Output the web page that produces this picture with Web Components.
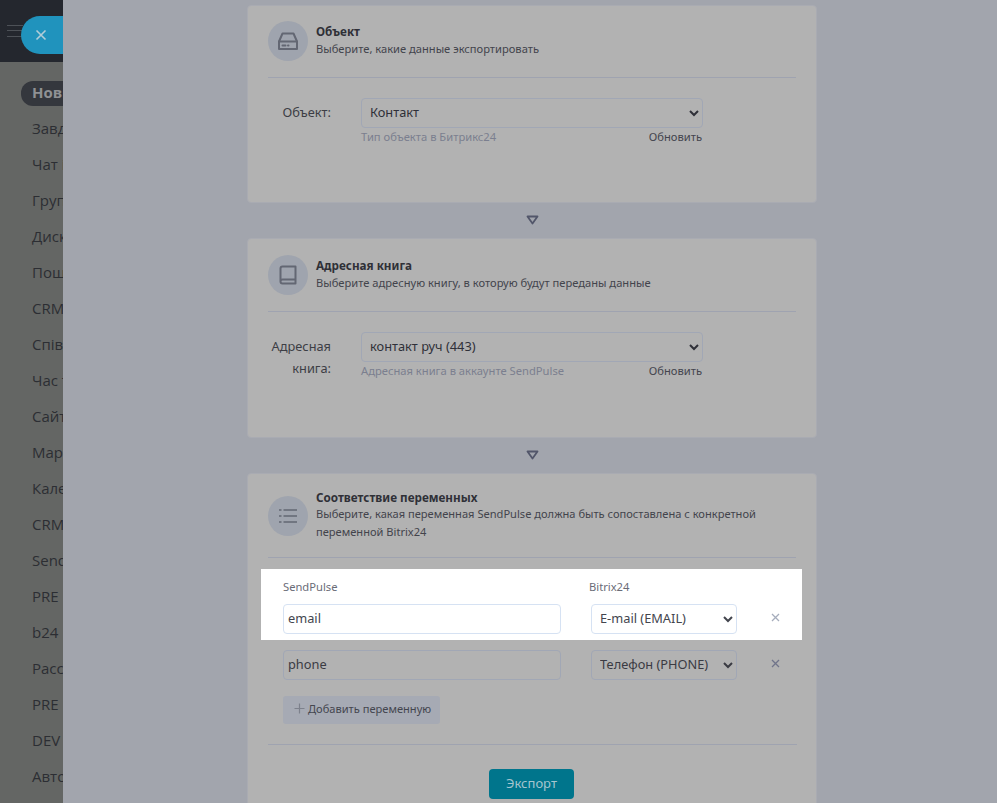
<!DOCTYPE html>
<html lang="ru">
<head>
<meta charset="utf-8">
<title>Экспорт</title>
<style>
  html, body { margin: 0; height: 100%; overflow: hidden; }
  body { font-family: "Noto Sans", "Liberation Sans", sans-serif; }
</style>
</head>
<body>
<app-shell>
  <side-nav slot="nav">
    <nav-item active>Новини</nav-item>
    <nav-item>Завдання</nav-item>
    <nav-item>Чат і дзвінки</nav-item>
    <nav-item>Групи</nav-item>
    <nav-item>Диск</nav-item>
    <nav-item>Пошта</nav-item>
    <nav-item>CRM</nav-item>
    <nav-item>Співробітники</nav-item>
    <nav-item>Час та звіти</nav-item>
    <nav-item>Сайти</nav-item>
    <nav-item>Маркетинг</nav-item>
    <nav-item>Календар</nav-item>
    <nav-item>CRM</nav-item>
    <nav-item>SendPulse</nav-item>
    <nav-item>PRE</nav-item>
    <nav-item>b24</nav-item>
    <nav-item>Рассылки</nav-item>
    <nav-item>PRE</nav-item>
    <nav-item>DEV</nav-item>
    <nav-item>Автоматизація</nav-item>
  </side-nav>

  <export-card heading="Объект" style="height:198px">
    <svg slot="icon" viewBox="0 0 24 24" width="24" height="24" fill="none" stroke="currentColor" stroke-width="2" stroke-linejoin="round" stroke-linecap="round"><path d="M6.500 4.500h11l3.500 8v7.500H3v-7.500z"/><path d="M3 12.500h18"/><path d="M6.500 16.500h3M12 16.500h.5"/></svg>
    <span slot="sub">Выберите, какие данные экспортировать</span>
    <select-field label="Объект:" value="Контакт" hint="Тип объекта в Битрикс24"></select-field>
  </export-card>
  <flow-arrow></flow-arrow>
  <export-card heading="Адресная книга" style="height:200px;padding-top:16px">
    <svg slot="icon" viewBox="0 0 24 24" width="24" height="24" fill="none" stroke="currentColor" stroke-width="2" stroke-linejoin="round" stroke-linecap="round"><path d="M4.500 18.500V5.500a2 2 0 0 1 2-2h13v17h-13a2 2 0 0 1-2-2a2 2 0 0 1 2-2h13"/></svg>
    <span slot="sub">Выберите адресную книгу, в которую будут переданы данные</span>
    <select-field label="Адресная книга:" value="контакт руч (443)" hint="Адресная книга в аккаунте SendPulse"></select-field>
  </export-card>
  <flow-arrow></flow-arrow>
  <export-card heading="Соответствие переменных" tall>
    <svg slot="icon" viewBox="0 0 24 24" width="24" height="24" fill="none" stroke="currentColor" stroke-width="1.600"><path d="M7.500 6H21M7.500 12H21M7.500 18H21"/><path d="M3 6h2.500M3 12h2.500M3 18h2.500"/></svg>
    <span slot="sub">Выберите, какая переменная SendPulse должна быть сопоставлена с конкретной переменной Bitrix24</span>
    <map-table>
      <map-row slot="first" field="email" target="E-mail (EMAIL)" lit></map-row>
      <map-row field="phone" target="Телефон (PHONE)"></map-row>
    </map-table>
  </export-card>
</app-shell>

<script>
class AppShell extends HTMLElement {
  constructor() {
    super();
    this.attachShadow({ mode: "open" });
    this.shadowRoot.innerHTML = `
      <style>
        :host { display: flex; height: 803px; overflow: hidden; position: relative; }
        .side { flex: 0 0 63px; overflow: hidden; }
        .panel { flex: 1; background: #a2a5ad; padding: 5px 180px 0 184px; overflow: hidden; }
      </style>
      <div class="side"><slot name="nav"></slot></div>
      <div class="panel"><slot></slot></div>
    `;
  }
}

class SideNav extends HTMLElement {
  constructor() {
    super();
    this.attachShadow({ mode: "open" });
    this.shadowRoot.innerHTML = `
      <style>
        :host { display: block; width: 63px; height: 803px; background: #646664; position: relative; overflow: hidden; }
        .top { height: 62px; background: #24272e; }
        .burger { position: absolute; left: 7px; top: 25px; width: 16px; height: 12px; border-top: 1px solid #4d5157; border-bottom: 1px solid #4d5157; box-sizing: border-box; }
        .burger::after { content: ""; display: block; height: 1px; margin-top: 4px; background: #4d5157; }
        .close { position: absolute; left: 21px; top: 16px; width: 80px; height: 38px; border-radius: 19px; background: #2093bd; color: #b3cdd8; }
        .close svg { position: absolute; left: 14px; top: 13px; }
        ul { margin: 0; padding: 18px 0 0; list-style: none; }
      </style>
      <div class="top"></div>
      <span class="burger"></span>
      <div class="close"><svg width="12" height="12" viewBox="0 0 12 12" fill="none" stroke="currentColor" stroke-width="1.600"><path d="M1.500 1.500l9 9M10.500 1.500l-9 9"/></svg></div>
      <ul><slot></slot></ul>
    `;
  }
}

class NavItem extends HTMLElement {
  constructor() {
    super();
    this.attachShadow({ mode: "open" });
    this.shadowRoot.innerHTML = `
      <style>
        :host { display: block; height: 36px; font: 15px/24px "Open Sans", "Noto Sans", sans-serif; color: #2c2e33; white-space: nowrap; }
        span { display: inline-block; margin-left: 21px; padding: 0 14px 0 11px; border-radius: 12px; height: 24px; }
        :host([active]) span { background: #34373d; color: #8f9194; font-weight: 700; height: 25px; line-height: 22px; }
      </style>
      <span><slot></slot></span>
    `;
  }
}

class ExportCard extends HTMLElement {
  constructor() {
    super();
    this.attachShadow({ mode: "open" });
    const title = this.getAttribute("heading");
    this.shadowRoot.innerHTML = `
      <style>
        :host { display: block; box-sizing: border-box; background: #b2b2b2; border: 1px solid #a9abb2; border-radius: 4px; padding: 15px 20px 0; color: #35363d; font: 11.150px/18px "Noto Sans", sans-serif; }
        header { display: flex; gap: 8px; align-items: flex-start; height: 56px; border-bottom: 1px solid #9fa3b0; }
        :host([tall]) { height: 340px; padding-top: 22px; }
        :host([tall]) header { height: 61px; }
        .circle { flex: 0 0 40px; height: 40px; border-radius: 50%; background: #9fa4ae; color: #636773; display: flex; align-items: center; justify-content: center; }
        h3 { margin: 2px 0 0; font-size: 11.700px; line-height: 17px; font-weight: 700; color: #2f3037; }
        p { margin: 0; color: #43444c; }
        :host([tall]) h3 { margin-top: -7px; line-height: 16px; }
        :host([tall]) p { font-size: 11.100px; }
      </style>
      <header>
        <div class="circle"><slot name="icon"></slot></div>
        <div>
          <h3>${title}</h3>
          <p><slot name="sub"></slot></p>
        </div>
      </header>
      <slot></slot>
    `;
  }
}

class SelectField extends HTMLElement {
  constructor() {
    super();
    this.attachShadow({ mode: "open" });
    this.shadowRoot.innerHTML = `
      <style>
        :host { display: grid; grid-template-columns: 63px 342px; column-gap: 30px; padding: 20px 0 0 0; font: 12px/18px "Noto Sans", sans-serif; }
        label { text-align: right; color: #3d3e45; padding-top: 3px; line-height: 22px; font-size: 12.800px; }
        select { display: block; width: 100%; height: 30px; background: transparent; border: 1px solid #a1a7b5; border-radius: 4px; padding: 0 4px 2px; color: #2f3038; font: 12.800px "Noto Sans", sans-serif; }
        .meta { display: flex; justify-content: space-between; padding: 0 1px 0 0; font-size: 11.200px; line-height: 18px; }
        .hint { color: #7b7f8f; }
        .refresh { color: #44454e; }
      </style>
      <label>${this.getAttribute("label")}</label>
      <div>
        <select><option>${this.getAttribute("value")}</option></select>
        <div class="meta"><span class="hint">${this.getAttribute("hint")}</span><span class="refresh">Обновить</span></div>
      </div>
    `;
  }
}

class MapTable extends HTMLElement {
  constructor() {
    super();
    this.attachShadow({ mode: "open" });
    this.shadowRoot.innerHTML = `
      <style>
        :host { display: block; margin: 11px -6px 0 -7px; font: 11.200px/18px "Noto Sans", sans-serif; }
        .lit { display: block; background: #fff; height: 71px; box-sizing: border-box; padding: 9px 0 0 22px; }
        .heads { display: grid; grid-template-columns: 306px auto; height: 26px; color: #6a6c77; }
        .rest { padding: 10px 0 0 22px; }
        button { all: unset; box-sizing: border-box; display: flex; align-items: center; gap: 3px; width: 157px; height: 28px; margin-top: 16px; padding: 0 0 4px 11px; background: #a6aab4; border-radius: 3px; color: #44464f; font: 11.100px "Noto Sans", sans-serif; }
        button svg { color: #7d818c; }
        hr { border: 0; border-top: 1px solid #9fa3b0; margin: 20px 5px 0 7px; }
        .export { display: block; margin: 24px 0 0 228px; width: 85px; height: 30px; padding: 0 0 2px; text-align: center; line-height: 28px; background: #00758c; color: #a5c5cf; border-radius: 4px; font-size: 13px; }
      </style>
      <div class="lit">
        <div class="heads"><span>SendPulse</span><span>Bitrix24</span></div>
        <slot name="first"></slot>
      </div>
      <div class="rest">
        <slot></slot>
        <button><svg width="11" height="11" viewBox="0 0 11 11" fill="none" stroke="currentColor" stroke-width="1.200"><path d="M5.500 0.500v10M0.500 5.500h10"/></svg>Добавить переменную</button>
      </div>
      <hr>
      <button class="export">Экспорт</button>
    `;
  }
}

class MapRow extends HTMLElement {
  constructor() {
    super();
    this.attachShadow({ mode: "open" });
    this.shadowRoot.innerHTML = `
      <style>
        :host { display: grid; grid-template-columns: 278px 146px auto; column-gap: 30px; align-items: center; font: 12.800px "Noto Sans", sans-serif; color: #3a3b43; --line: #a1a7b5; --x: #70748a; }
        :host([lit]) { color: #43454e; --line: #d6e2f3; --x: #a6adbc; }
        .box { box-sizing: border-box; height: 30px; width: 100%; background: transparent; border: 1px solid var(--line); border-radius: 4px; color: inherit; font: inherit; padding: 0 4px 2px; }
        svg { color: var(--x); margin-left: 4px; margin-top: -4px; }
      </style>
      <input class="box" value="${this.getAttribute("field")}">
      <select class="box"><option>${this.getAttribute("target")}</option></select>
      <svg width="9" height="9" viewBox="0 0 9 9" fill="none" stroke="currentColor" stroke-width="1.300"><path d="M1 1l7 7M8 1L1 8"/></svg>
    `;
  }
}

class FlowArrow extends HTMLElement {
  constructor() {
    super();
    this.attachShadow({ mode: "open" });
    this.shadowRoot.innerHTML = `
      <style>
        :host { display: flex; justify-content: center; align-items: center; box-sizing: border-box; height: 35px; padding-bottom: 2px; color: #52566a; }
      </style>
      <svg width="13" height="10" viewBox="0 0 13 10" fill="none" stroke="currentColor" stroke-width="1.800" stroke-linejoin="round"><path d="M1.500 1.500h10l-5 7z"/></svg>
    `;
  }
}

customElements.define("app-shell", AppShell);
customElements.define("side-nav", SideNav);
customElements.define("nav-item", NavItem);
customElements.define("export-card", ExportCard);
customElements.define("select-field", SelectField);
customElements.define("map-table", MapTable);
customElements.define("map-row", MapRow);
customElements.define("flow-arrow", FlowArrow);
</script>
</body>
</html>
